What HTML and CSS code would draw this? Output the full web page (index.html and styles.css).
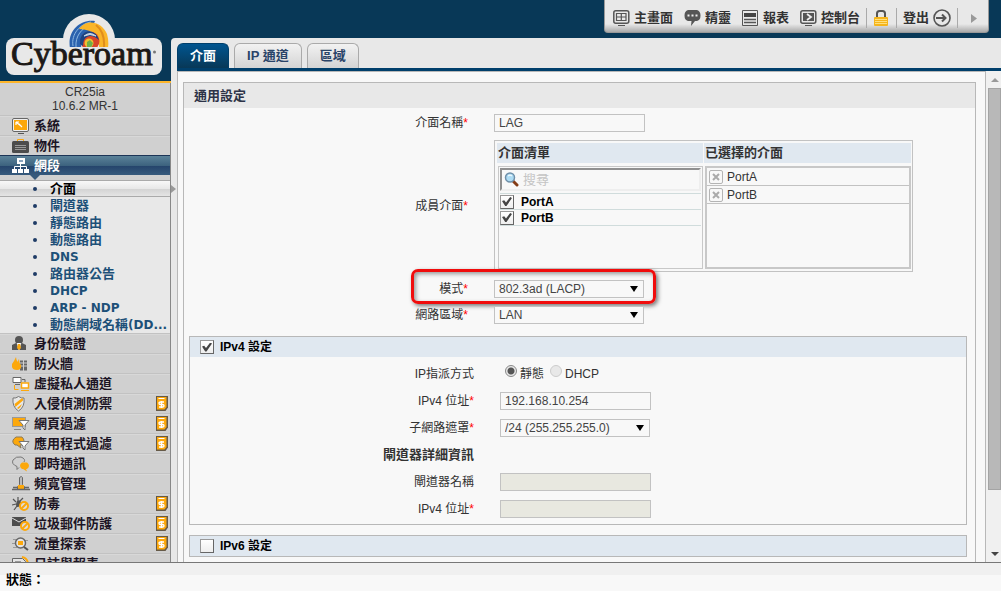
FILE: index.html
```
<!DOCTYPE html>
<html lang="zh-Hant">
<head>
  <meta charset="UTF-8">
  <meta name="viewport" content="width=device-width, initial-scale=1.0">
  <title>Cyberoam</title>
  <link rel="stylesheet" href="styles.css">
</head>
<body>
  <!-- Shared badge for subscription modules -->
  <svg class="defs" aria-hidden="true">
    <symbol id="paid" viewBox="0 0 12 15">
      <path d="M0 0h12v11.500l-2.500 3.500H0z" fill="#665a48"/>
      <path d="M1 1h9.500v10l-2 2.500H1z" fill="#fca80c"/>
      <path d="M2.500 2.500h6" stroke="#fff"/>
      <path d="M8 6H4.500Q3 6 3 7.200T4.500 8.500h2Q8 8.500 8 9.800T6.500 11H3M5.500 5v7" fill="none" stroke="#fff" stroke-width="1.300"/>
    </symbol>
  </svg>

  <div class="app">
    <aside class="sidebar">
      <div class="brand">
        <svg class="logo" viewBox="0 0 171 81" role="img" aria-label="Cyberoam">
          <circle cx="89" cy="40" r="26" fill="#e8e8e8"/>
          <rect x="6" y="38" width="156" height="37" rx="8" fill="#e8e8e8"/>
          <g clip-path="url(#swirl)">
            <path d="M70 48C67 32 79 19 95 21L91 30Q82 34 81 48z" fill="#2a62ae"/>
            <path d="M73 46C71 34 80 24 91 22M76 47C75 36 82 28 90 25" fill="none" stroke="#8db8e2"/>
            <path d="M79 29C87 18 102 22 107 34Q109 41 108 48H99Q100 35 90 31Q84 29 79 29z" fill="#fab529"/>
            <path d="M96 25Q105 32 104 47" fill="none" stroke="#e08d1c" stroke-width="2"/>
            <circle cx="90" cy="41" r="9.500" fill="#d8452a"/>
            <path d="M80 44Q79 33 89 31Q97 32 99 40Q92 34 87 37Q83 39 83 46z" fill="#1d4482"/>
            <path d="M84 36Q90 31 96 36Q90 33 84 36z" fill="#e3e7ed" stroke="#c9d6e6"/>
            <circle cx="89" cy="43" r="4.500" fill="#f0c030"/>
            <path d="M87 42l3-2 3 3-2 5h-4z" fill="#6fae48"/>
          </g>
          <clipPath id="swirl"><path d="M69 20h40v27H69z"/></clipPath>
          <text class="logo-text" x="11" y="65">Cyberoam</text>
          <circle cx="154.500" cy="52" r="1.500" fill="#777"/>
        </svg>
      </div>
      <div class="model">CR25ia<br>10.6.2 MR-1</div>

      <nav class="menu">
        <a href="#" class="menu-item">
          <svg class="icon" viewBox="0 0 18 16"><rect x=".5" y=".5" width="16" height="13" rx="1.500" fill="#eee" stroke="#666"/><path d="M2 2h13v10H2z" fill="#fca80c"/><path d="M4 4l5 4M4 4l3 0M4 4v3M7 6l3 3" stroke="#fff" stroke-width="1.200"/><path d="M6 15.500h6" stroke="#555"/></svg>
          系統
        </a>
        <a href="#" class="menu-item">
          <svg class="icon" viewBox="0 0 18 16"><path d="M5.500 3.500v-2h6v2" fill="none" stroke="#fca80c"/><rect y="3" width="17" height="12" rx="1.500" fill="#4c4c4c"/><path d="M3 7.500h11M3 9.500h11M3 11.500h11" stroke="#999"/></svg>
          物件
        </a>
        <a href="#" class="menu-item current">
          <svg class="icon" viewBox="0 0 18 16"><path d="M5 0h8v6H5zM0 11h5v4H0zM6 11h5v4H6zM12 11h5v4h-5z" fill="#fff"/><path d="M7 2h4v2H7z" fill="#8aa5bf"/><path d="M8.500 6v5M2.500 11V8.500h12V11" fill="none" stroke="#fff"/></svg>
          網段
        </a>
        <ul class="submenu">
          <li class="selected"><a href="#">介面</a></li>
          <li><a href="#">閘道器</a></li>
          <li><a href="#">靜態路由</a></li>
          <li><a href="#">動態路由</a></li>
          <li><a href="#" class="latin">DNS</a></li>
          <li><a href="#">路由器公告</a></li>
          <li><a href="#" class="latin">DHCP</a></li>
          <li><a href="#" class="latin">ARP - NDP</a></li>
          <li><a href="#">動態網域名稱<span class="latin">(DD...</span></a></li>
        </ul>
        <a href="#" class="menu-item">
          <svg class="icon" viewBox="0 0 18 16"><circle cx="7" cy="4" r="4" fill="#555"/><path d="M0 14V9l4-2 3 2 3-2 4 2v5z" fill="#555"/><path d="M5 7h4l-1 6-1 1-1-1z" fill="#fff"/><path d="M6 8h2l1 4-2 2-2-2z" fill="#fca80c"/></svg>
          身份驗證
        </a>
        <a href="#" class="menu-item">
          <svg class="icon" viewBox="0 0 18 16"><path d="M8 5.500h8M8 8.500h8M8 11.500h8M8 13.500h8" stroke="#666" stroke-width="2" stroke-dasharray="3 1"/><path d="M4 1q0 3 2 5 0-2 1-3 0 4 2 6 1 5-4 5-6 0-5-6l2-3q1-2 2-4z" fill="#fca80c"/></svg>
          防火牆
        </a>
        <a href="#" class="menu-item">
          <svg class="icon" viewBox="0 0 18 16"><path d="M1 1.500h8v5H1zM3 8.500h5" fill="#fff" stroke="#666"/><path d="M9.500 7h7v5h-7z" fill="#fff" stroke="#fca80c" stroke-width="1.500"/><path d="M9 14.500h8M2.500 9v4.500h4" fill="none" stroke="#fca80c"/><path d="M10 3.500h3V6" fill="none" stroke="#666"/></svg>
          虛擬私人通道
        </a>
        <a href="#" class="menu-item">
          <svg class="icon" viewBox="0 0 18 16"><path d="M6.500 .5q3 2 5.500 1.500 1 9-5.500 13Q0 11 1 2q3 .5 5.500-1.500z" fill="#e8e8e8" stroke="#777"/><path d="M2.500 8l7-5.500h1.500v2L3.500 11zM5 12l5-4q-1 3-3.500 5z" fill="#fca80c"/></svg>
          入侵偵測防禦
          <svg class="paid"><use href="#paid"/></svg>
        </a>
        <a href="#" class="menu-item">
          <svg class="icon" viewBox="0 0 18 16"><rect x=".5" y="1.500" width="13" height="9" fill="#fca80c" stroke="#999"/><path d="M2 13.500h7" stroke="#888"/><path d="M7 4.500h10l-4 4.500v5l-2-2V9z" fill="#fff" stroke="#777"/></svg>
          網頁過濾
          <svg class="paid"><use href="#paid"/></svg>
        </a>
        <a href="#" class="menu-item">
          <svg class="icon" viewBox="0 0 18 16"><path d="M4 1h6q4 4 0 8H8l1 3-4-3H3q-5-4 1-8z" fill="#fca80c" stroke="#8a7a5a"/><path d="M7 5.500h10L13 10v4l-2-2v-2z" fill="#fff" stroke="#777"/></svg>
          應用程式過濾
          <svg class="paid"><use href="#paid"/></svg>
        </a>
        <a href="#" class="menu-item">
          <svg class="icon" viewBox="0 0 18 16"><path d="M7 11.500l-2 2v-3Q-1 8 1 4q3-4 8-3 5 2 3 5" fill="none" stroke="#777"/><path d="M10 6.500h5q4 3 0 6.500h-1l1 2.500-4-2.500h-1q-4-3.500 0-6.500z" fill="#fca80c"/></svg>
          即時通訊
        </a>
        <a href="#" class="menu-item">
          <svg class="icon" viewBox="0 0 18 16"><path d="M7.500 1.500q2-2 3 0v7l2 2v3h-7v-3l2-2z" fill="#bbb" stroke="#666"/><path d="M6 9h6v5H6z" fill="#fca80c"/><path d="M0 13.500h18M1 11.500h4M13 11.500h4" stroke="#666" stroke-width="1.500"/></svg>
          頻寬管理
        </a>
        <a href="#" class="menu-item">
          <svg class="icon" viewBox="0 0 18 16"><path d="M5 5q4-2 4 2t-4 4q-2-2 0-6z" fill="#555"/><path d="M1 3l3 3M0 9l4-1M2 14l3-4M6 1v4M8 5l3-3" stroke="#555" stroke-width="1.200"/><circle cx="12" cy="10" r="4" fill="#ddd" stroke="#fca80c" stroke-width="2"/><path d="M9 13l6-6" stroke="#fca80c" stroke-width="2"/></svg>
          防毒
          <svg class="paid"><use href="#paid"/></svg>
        </a>
        <a href="#" class="menu-item">
          <svg class="icon" viewBox="0 0 18 16"><path d="M0 1h14v9H0z" fill="#4c4c4c"/><path d="M0 2l7 4 7-4" fill="none" stroke="#ddd"/><circle cx="13" cy="10" r="4" fill="#ddd" stroke="#fca80c" stroke-width="2"/><path d="M10 13l6-6" stroke="#fca80c" stroke-width="2"/></svg>
          垃圾郵件防護
          <svg class="paid"><use href="#paid"/></svg>
        </a>
        <a href="#" class="menu-item">
          <svg class="icon" viewBox="0 0 18 16"><path d="M1 3.500h4M0 7.500h3M1 11.500h4M13 4.500h3" stroke="#999"/><circle cx="8.500" cy="7" r="5" fill="#e4e4e4" stroke="#666" stroke-width="1.500"/><rect x="6" y="5" width="5" height="4" fill="#fca80c"/><path d="M12 11l4 3" stroke="#555" stroke-width="2"/></svg>
          流量探索
          <svg class="paid"><use href="#paid"/></svg>
        </a>
        <a href="#" class="menu-item">
          <svg class="icon" viewBox="0 0 18 16"><path d="M.5 14V2.500h10l3 3V14z" fill="#e4e4e4" stroke="#666"/><path d="M3 5.500h6M3 8.500h6" stroke="#999"/><path d="M10 1q6 1 6 8" fill="none" stroke="#fca80c" stroke-width="2"/></svg>
          日誌與報表
        </a>
      </nav>
    </aside>

    <main class="main">
      <header class="topbar">
        <div class="toolbar">
          <a href="#"><svg class="tool-icon" viewBox="0 0 17 17"><rect x=".8" y=".8" width="15" height="12.400" rx="2" fill="none" stroke="#555" stroke-width="1.500"/><path d="M3.500 3.500h9.500v7H3.500zM8.300 3v8M3 7h10M5 15.500h7" fill="none" stroke="#555" stroke-width="1.200"/></svg>主畫面</a>
          <a href="#"><svg class="tool-icon" viewBox="0 0 17 17"><path d="M4 0h9q3.500 1 3.500 5.500T13 11h-2l-4 5 .5-5H4Q.5 10 .5 5.500T4 0z" fill="#555"/><path d="M3.500 4.500h2v2h-2zM7.500 4.500h2v2h-2zM11.500 4.500h2v2h-2z" fill="#eee"/></svg>精靈</a>
          <a href="#"><svg class="tool-icon" viewBox="0 0 17 17"><path d="M.5.5h15v15H.5z" fill="none" stroke="#555"/><path d="M2 3h12v4H2z" fill="#444"/><path d="M2 9.500h12M2 12.500h12" stroke="#555" stroke-width="1.500"/></svg>報表</a>
          <a href="#"><svg class="tool-icon" viewBox="0 0 17 17"><rect x=".8" y=".8" width="15" height="12.400" rx="2" fill="none" stroke="#555" stroke-width="1.500"/><path d="M3 3h11v8H3z" fill="#555"/><path d="M7 4l4 3-4 3" fill="none" stroke="#eee" stroke-width="1.800"/><path d="M5 15.500h7" stroke="#555"/></svg>控制台</a>
          <button class="tool-button lock" type="button" aria-label="Lock"><svg width="14" height="16" viewBox="0 0 14 16"><path d="M3 8V3.500Q3 1 5.500 1h3Q11 1 11 3.500V8" fill="none" stroke="#555" stroke-width="2"/><rect y="7" width="14" height="9" rx="1" fill="#f6b51b"/><path d="M1 9.500h12M1 11.500h12M1 13.500h12" stroke="#ffe07d"/></svg></button>
          <a href="#" class="logout">登出<svg width="18" height="18" viewBox="0 0 18 18"><circle cx="9" cy="9" r="8" fill="none" stroke="#555" stroke-width="1.600"/><path d="M3 9h9M9 5.500L12.500 9 9 12.500" fill="none" stroke="#555" stroke-width="2"/></svg></a>
          <button class="tool-button collapse" type="button" aria-label="Collapse"><svg width="6" height="9" viewBox="0 0 6 9"><path d="M0 0l6 4.500L0 9z" fill="#999"/></svg></button>
        </div>
      </header>

      <nav class="tabs">
        <a href="#" class="tab active">介面</a>
        <a href="#" class="tab">IP 通道</a>
        <a href="#" class="tab">區域</a>
      </nav>

      <div class="viewport">
        <form class="page">
          <section class="card">
            <h2 class="card-title">通用設定</h2>
            <div class="fields general">
              <label for="name">介面名稱<em>*</em></label>
              <input class="text" id="name" type="text" value="LAG">

              <span>成員介面<em>*</em></span>
              <div class="picker">
                <div class="picker-col">
                  <h3>介面清單</h3>
                  <div class="list available">
                    <div class="search">
                      <svg width="15" height="15" viewBox="0 0 15 15"><path d="M9 9l4 4" stroke="#843c16" stroke-width="3" stroke-linecap="round"/><circle cx="6" cy="5.500" r="4.500" fill="#aedcf4" stroke="#6f8fa8" stroke-width="1.500"/><path d="M4 4q2-2 4 0" fill="none" stroke="#fff"/></svg>
                      <input type="text" placeholder="搜尋" aria-label="搜尋">
                    </div>
                    <label class="option"><input type="checkbox" checked>PortA</label>
                    <label class="option"><input type="checkbox" checked>PortB</label>
                  </div>
                </div>
                <div class="picker-col">
                  <h3>已選擇的介面</h3>
                  <div class="list chosen">
                    <div class="chosen-item"><button type="button" aria-label="Remove PortA"><svg width="8" height="8" viewBox="0 0 8 8"><path d="M1 1l6 6M7 1L1 7" stroke="#aaa" stroke-width="2"/></svg></button>PortA</div>
                    <div class="chosen-item"><button type="button" aria-label="Remove PortB"><svg width="8" height="8" viewBox="0 0 8 8"><path d="M1 1l6 6M7 1L1 7" stroke="#aaa" stroke-width="2"/></svg></button>PortB</div>
                  </div>
                </div>
              </div>

              <label for="mode">模式<em>*</em></label>
              <div class="select highlighted"><select id="mode"><option>802.3ad (LACP)</option></select></div>

              <label for="zone">網路區域<em>*</em></label>
              <div class="select"><select id="zone"><option>LAN</option></select></div>
            </div>

            <div class="group">
              <label class="group-title"><input type="checkbox" checked>IPv4 設定</label>
              <div class="fields ipv4">
                <span>IP指派方式</span>
                <div class="radios">
                  <label><input type="radio" name="assign" checked>靜態</label>
                  <label><input type="radio" name="assign">DHCP</label>
                </div>
                <label for="ip">IPv4 位址<em>*</em></label>
                <input class="text" id="ip" type="text" value="192.168.10.254">
                <label for="mask">子網路遮罩<em>*</em></label>
                <div class="select"><select id="mask"><option>/24 (255.255.255.0)</option></select></div>
                <strong>閘道器詳細資訊</strong>
                <span></span>
                <label for="gw-name">閘道器名稱</label>
                <input class="text" id="gw-name" type="text" disabled>
                <label for="gw-ip">IPv4 位址<em>*</em></label>
                <input class="text" id="gw-ip" type="text" disabled>
              </div>
            </div>

            <div class="group">
              <label class="group-title"><input type="checkbox">IPv6 設定</label>
            </div>
          </section>
        </form>
        <div class="scrollbar" aria-hidden="true">
          <span class="arrow up"></span>
          <span class="track"><span class="thumb"></span></span>
          <span class="arrow down"></span>
        </div>
      </div>
    </main>
  </div>

  <footer class="status">狀態：</footer>
</body>
</html>
```
FILE: styles.css
```
* {
  box-sizing: border-box;
}
body {
  margin: 0;
  height: 100vh;
  display: flex;
  flex-direction: column;
  overflow: hidden;
  background: #e8e8e8;
  color: #333;
  font: 12px/16px "Liberation Sans", "Noto Sans CJK TC", sans-serif;
}
a {
  color: inherit;
  text-decoration: none;
}
button {
  padding: 0;
  border: none;
  background: none;
  cursor: pointer;
}
.defs {
  position: absolute;
  width: 0;
  height: 0;
}
.app {
  flex: 1;
  min-height: 0;
  display: flex;
  background: #083857;
}

/* Sidebar */
.sidebar {
  position: relative;
  z-index: 1;
  flex: none;
  width: 171px;
  overflow-x: visible;
  overflow-y: clip;
  background: #d0d0d0;
}
.brand {
  background: #083857;
  border-bottom: 2px solid #fdb52a;
}
.logo {
  display: block;
  width: 171px;
  height: 81px;
}
.logo-text {
  font-family: "Liberation Serif", serif;
  font-size: 34px;
  fill: #1c1816;
  stroke: #1c1816;
  stroke-width: 1px;
}
.model {
  padding: 2px 0;
  border-right: 1px solid #888;
  line-height: 14px;
  text-align: center;
}
.menu {
  border-right: 1px solid #888;
  font-size: 13px;
  font-weight: bold;
}
.menu-item {
  display: flex;
  align-items: center;
  gap: 4px;
  height: 20px;
  padding: 0 2px 0 12px;
  border-top: 1px solid #c2c2c2;
  box-shadow: inset 0 1px #d8d8d8;
  line-height: 19px;
  color: #1c1424;
}
.icon {
  flex: none;
  width: 18px;
  height: 16px;
}
.paid {
  width: 12px;
  height: 15px;
  margin-left: auto;
}
.menu-item.current {
  position: relative;
  border-top-color: #1d3557;
  background: linear-gradient(#5b8299, #3d637f 50%, #24436b 50%, #365a7c);
  box-shadow: none;
  color: #fff;
}
.menu-item.current::after {
  content: "";
  position: absolute;
  top: 19px;
  left: 30px;
  border: 5px solid transparent;
  border-top-color: #365a7c;
  border-bottom: none;
}
.submenu {
  margin: 0;
  padding: 5px 0 0;
  list-style: none;
  line-height: 18px;
  color: #1d5078;
}
.submenu li {
  display: flex;
  height: 17px;
  background: #e8e8e8;
}
.submenu li::before {
  content: "";
  width: 4px;
  height: 4px;
  margin: 7px 13px 0 33px;
  border-radius: 2px;
  background: #1f3c66;
}
.submenu a {
  white-space: nowrap;
}
.latin {
  font-family: "DejaVu Sans", sans-serif;
  font-size: 12px;
}
.submenu .selected {
  position: relative;
  border: solid #aaa;
  border-width: 1px 0;
  background: linear-gradient(#f8f8f8, #e8e8e8 50%, #d2d2d2 50%, #e4e4e4);
  line-height: 16px;
  color: #000;
}
.submenu .selected::before {
  margin-top: 6px;
}
.submenu .selected::after {
  content: "";
  position: absolute;
  top: 4px;
  right: -6px;
  border: 4px solid transparent;
  border-left: 5px solid #999;
  border-right: none;
}

/* Header */
.main {
  flex: 1;
  min-width: 0;
  display: flex;
  flex-direction: column;
}
.topbar {
  display: flex;
  justify-content: flex-end;
  height: 38px;
  padding-right: 12px;
}
.toolbar {
  display: flex;
  align-items: center;
  gap: 11px;
  height: 33px;
  padding: 4px 11px 0 8px;
  border: 1px solid #999;
  border-top: none;
  border-radius: 0 0 4px 4px;
  background: linear-gradient(#e8e8e8 75%, #aaa);
  font-size: 13px;
  font-weight: bold;
}
.toolbar a {
  display: flex;
  align-items: center;
  gap: 4px;
}
.tool-icon {
  width: 17px;
  height: 17px;
}
.tool-button {
  display: flex;
  align-items: center;
  height: 20px;
}
.lock {
  margin: 0 -5px;
  padding: 0 8px 0 7px;
  border: solid #aaa;
  border-width: 0 1px;
}
.collapse {
  margin-left: -5px;
  padding-left: 13px;
  border-left: 1px solid #aaa;
}

/* Tabs */
.tabs {
  display: flex;
  gap: 5px;
  height: 33px;
  padding: 5px 0 0 6px;
  border-radius: 4px 0 0 0;
  background: linear-gradient(#003f6b, #003f6b) 6px 100% / 100% 3px no-repeat #e8e8e8;
}
.tab {
  height: 25px;
  padding: 0 12px;
  border: 1px solid #aaa;
  border-bottom: none;
  border-radius: 6px 6px 0 0;
  background: linear-gradient(#f2f2f2, #d4d4d4);
  font-size: 13px;
  font-weight: bold;
  line-height: 24px;
  color: #2a4468;
}
.tab.active {
  border-color: #003f6b;
  background: linear-gradient(#005590, #083857);
  color: #fff;
}

/* Page */
.viewport {
  flex: 1;
  min-height: 0;
  display: flex;
  padding-left: 6px;
  background: #e8e8e8;
}
.page {
  flex: 1;
  overflow: hidden;
  padding: 10px 9px 0 5px;
  border: 1px solid #b8b8b8;
  border-bottom: none;
  background: #f8f8f8;
}
.card {
  height: 600px;
  border: 1px solid #b8b8b8;
}
.card-title {
  margin: 0;
  padding: 0 10px;
  background: #e8e8e8;
  font-size: 13px;
  line-height: 25px;
  color: #2d3347;
}
.fields {
  display: grid;
  grid-template-columns: 284px 1fr;
  column-gap: 26px;
  align-items: center;
}
.fields > :nth-child(odd) {
  text-align: right;
}
.fields em {
  color: #f00;
  font-style: normal;
}
.fields strong {
  font-size: 13px;
}
.general {
  row-gap: 8px;
  padding: 6px 0 4px;
}
.ipv4 {
  grid-auto-rows: 18px;
  row-gap: 9px;
  padding: 8px 0 6px;
}
.text {
  width: 151px;
  height: 18px;
  padding: 0 4px;
  border: 1px solid #c2c2c2;
  background: #f8f8f8;
  color: #444;
  font: inherit;
}
.text:disabled {
  background: #e8e8e0;
}
.select {
  position: relative;
  width: 150px;
}
.select select {
  display: block;
  appearance: none;
  width: 100%;
  height: 18px;
  padding: 0 4px;
  border: 1px solid #c2c2c2;
  border-radius: 0;
  background: #f8f8f8;
  color: #444;
  font: inherit;
}
.select::after {
  content: "";
  position: absolute;
  top: 6px;
  right: 6px;
  border: 4px solid transparent;
  border-top: 6px solid #000;
  border-bottom: none;
}
/* Ring around the mode field and its label */
.highlighted::before {
  content: "";
  position: absolute;
  inset: -11px -12px -6px -83px;
  border: 3px solid #f00c0c;
  border-radius: 7px;
  box-shadow: 2px 2px 4px #777, inset 2px 2px 4px #999;
  pointer-events: none;
}

/* Interface picker */
.picker {
  display: grid;
  grid-template-columns: 206px 207px;
  column-gap: 1px;
  width: 419px;
  height: 132px;
  padding: 2px;
  border: 1px solid #c2c2c2;
}
.picker-col {
  display: flex;
  flex-direction: column;
  gap: 3px;
}
.picker h3 {
  margin: 0;
  padding: 0 1px;
  background: #e0e8f0;
  font-size: 13px;
  line-height: 20px;
}
.list {
  flex: 1;
  margin-left: 1px;
  border: 1px solid #c8c8c8;
}
.available {
  padding: 1px;
}
.search {
  display: flex;
  align-items: center;
  gap: 4px;
  height: 23px;
  margin-bottom: 2px;
  padding-left: 2px;
  border: 2px solid #909090;
  border-right-color: #eee;
  border-bottom-color: #eee;
}
.search svg {
  flex: none;
}
.search input {
  width: 100%;
  min-width: 0;
  padding: 0;
  border: none;
  outline: none;
  background: none;
  font: inherit;
  font-size: 13px;
}
.search input::placeholder {
  color: #c4c4c4;
}
.option {
  display: flex;
  align-items: center;
  gap: 7px;
  height: 16px;
  border-top: 1px solid #d0dcdc;
  color: #000;
  font-weight: bold;
}
.option:last-child {
  height: 17px;
  border-bottom: 1px solid #d0dcdc;
}
.chosen {
  border-width: 2px;
}
.chosen-item {
  display: flex;
  align-items: center;
  gap: 4px;
  height: 18px;
  padding-left: 2px;
  border-bottom: 1px solid #c2c2c2;
  line-height: 20px;
}
.chosen-item button {
  display: grid;
  place-items: center;
  width: 14px;
  height: 14px;
  border: 1px solid #b4b4b4;
  border-radius: 2px;
}
input[type="checkbox"] {
  appearance: none;
  display: grid;
  place-items: center;
  width: 14px;
  height: 14px;
  margin: 0;
  border: 1px solid #999;
  border-right-color: #666;
  border-bottom-color: #666;
  background: linear-gradient(#fff, #eee);
}
input[type="checkbox"]:checked::before {
  content: "";
  width: 10px;
  height: 9px;
  background: #444;
  clip-path: polygon(0 45%, 22% 35%, 40% 60%, 82% 0, 100% 12%, 45% 100%, 32% 100%);
}

/* IPv4 / IPv6 groups */
.group {
  margin: 8px 8px 0 5px;
  border: 1px solid #b8b8b8;
}
.group + .group {
  margin-top: 10px;
}
.group-title {
  display: flex;
  align-items: center;
  gap: 6px;
  height: 20px;
  padding-left: 10px;
  background: #e0e8f0;
  color: #000;
  font-weight: bold;
}
.radios {
  display: flex;
  gap: 6px;
  padding-left: 5px;
}
.radios label {
  display: flex;
  align-items: flex-start;
  gap: 3px;
  line-height: 20px;
}
input[type="radio"] {
  appearance: none;
  width: 12px;
  height: 12px;
  margin: 1px 0 0;
  border: 1px solid #ccc;
  border-radius: 50%;
  background: #e8e8e8;
}
input[type="radio"]:checked {
  border-color: #888;
  background: radial-gradient(#555 3px, #e8e8e8 4px);
}

/* Scrollbar */
.scrollbar {
  display: flex;
  flex-direction: column;
  width: 15px;
  padding-left: 2px;
  background: #f0f0f0;
}
.arrow {
  height: 17px;
  display: grid;
  place-items: center;
}
.arrow::before {
  content: "";
  border: 4px solid transparent;
}
.up::before {
  border-top: none;
  border-bottom-color: #999;
}
.down::before {
  border-bottom: none;
  border-top-color: #444;
}
.track {
  flex: 1;
}
.thumb {
  display: block;
  height: 88%;
  border: 1px solid #a4a4a4;
  background: #b8b8b8;
}

.status {
  flex: none;
  height: 29px;
  padding: 9px 6px 0;
  border-top: 1px solid #777;
  background: linear-gradient(#f0f0f0 12px, #f8f8f8 12px);
  color: #000;
  font-size: 13px;
  font-weight: bold;
}
```
